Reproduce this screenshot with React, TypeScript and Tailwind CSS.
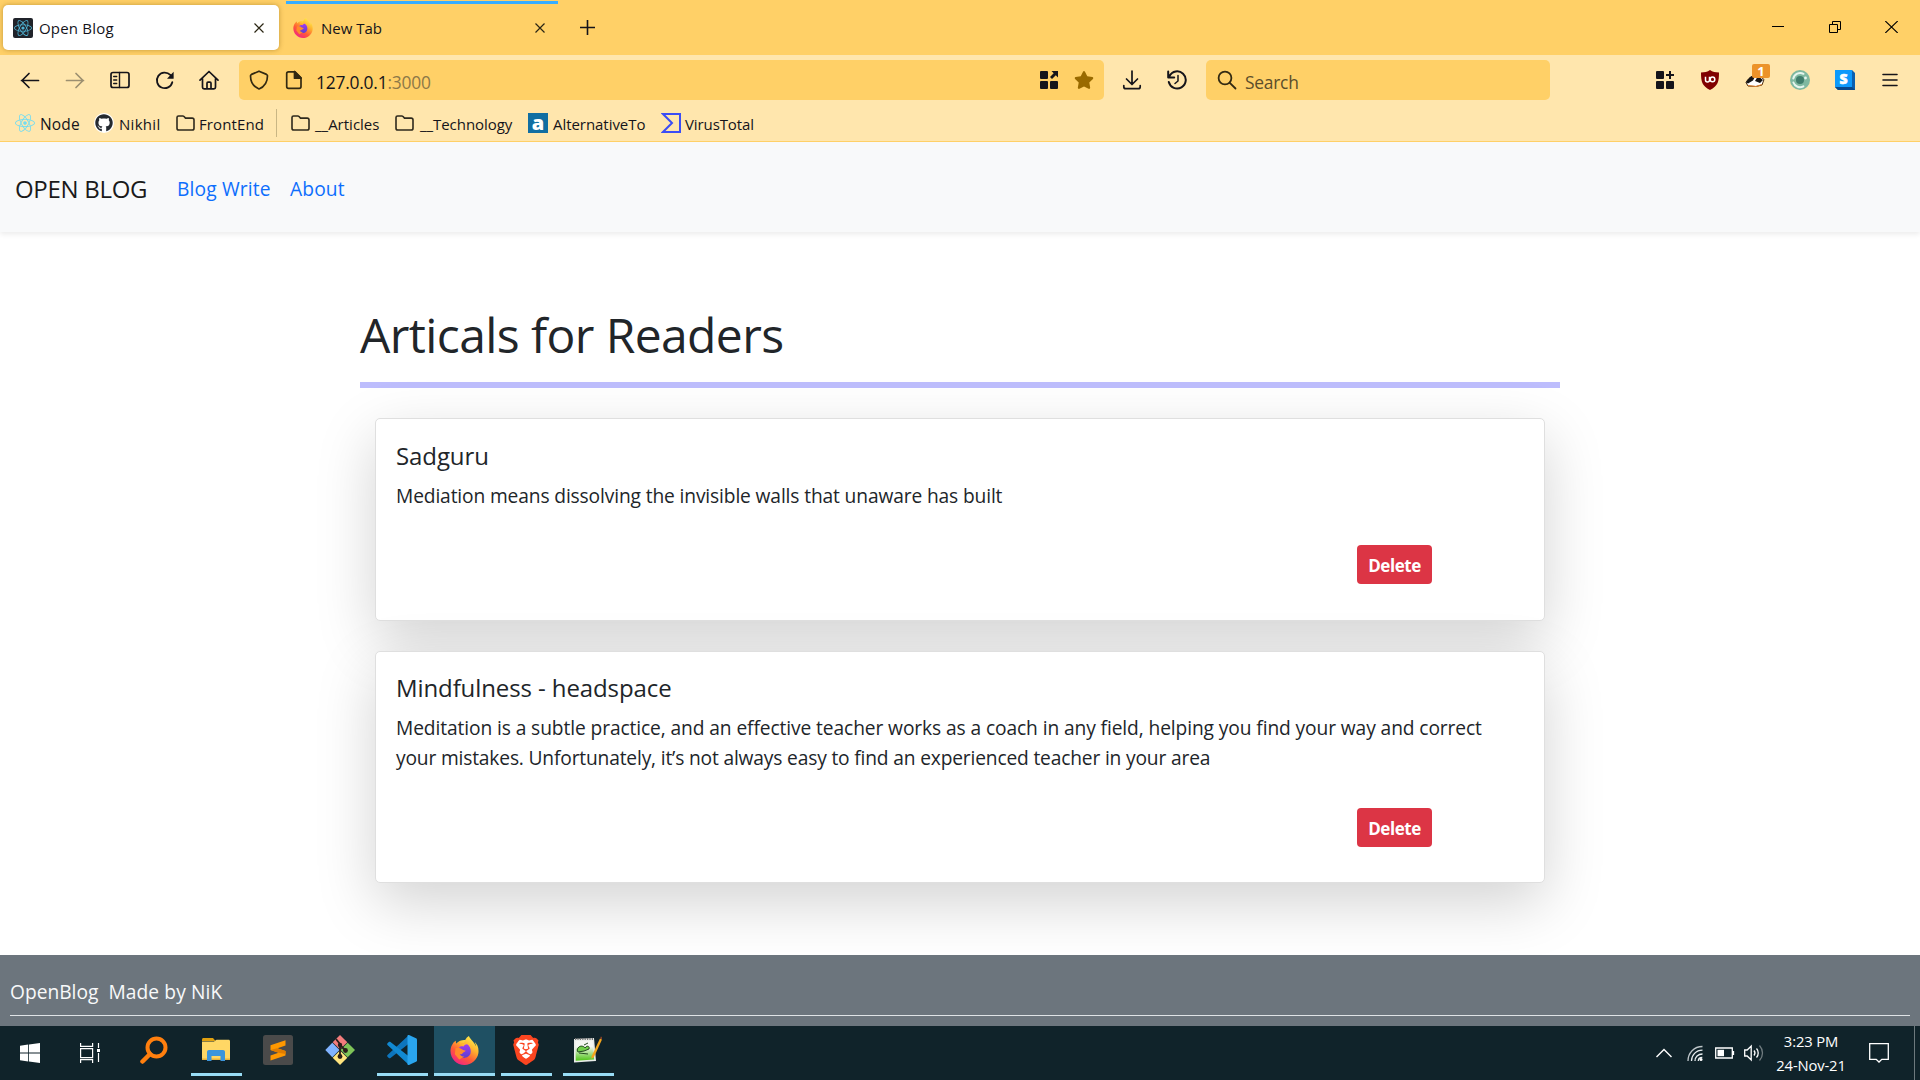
import type { ReactNode } from "react";
import { FaReact, FaGithub, FaStar } from "react-icons/fa";
import { SiBrave, SiFirefoxbrowser } from "react-icons/si";

function Firefox({ size }: { size: number }) {
  return (
    <svg width={size} height={size} viewBox="0 0 24 24" className="block shrink-0">
      <defs>
        <linearGradient id="ffBody" x1="0.85" y1="0.05" x2="0.25" y2="1">
          <stop offset="0" stopColor="#fff14d" />
          <stop offset="0.35" stopColor="#ffb02e" />
          <stop offset="0.65" stopColor="#ff5a36" />
          <stop offset="1" stopColor="#f01f8c" />
        </linearGradient>
        <linearGradient id="ffGlobe" x1="0" y1="0" x2="0" y2="1">
          <stop offset="0" stopColor="#a13cf0" />
          <stop offset="1" stopColor="#5b3fd0" />
        </linearGradient>
      </defs>
      <circle cx="12" cy="13" r="9.6" fill="url(#ffBody)" />
      <SiFirefoxbrowser size={24} fill="url(#ffBody)" color="url(#ffBody)" />
      <path d="M7.6 9.6c1-1.2 2.6-1.2 3.6-.9.7-1.3 1.8-2 3-1.9 2 1.2 3 3.400 3 5.900a5.200 5.200 0 0 1-10.400.4c.2-1.200.2-2.400.8-3.500Z" fill="url(#ffGlobe)" />
      <path d="M4.600 10.200c2.600-.6 4.500-.2 5.600 1 .8 1 2.200.5 2.800 1-.6 1.200-2 1-2.600 2-.4.8-1.400 1-2.400.8 1 1.500 2.400 2 4 1.900l-4.400 2.600L4 15Z" fill="#ff8a2b" />
    </svg>
  );
}

function TabClose({ className }: { className: string }) {
  return (
    <svg width="10" height="10" viewBox="0 0 10 10" className={className}>
      <path d="M.5.5l9 9M9.500.5l-9 9" stroke="#2b2614" strokeWidth="1.200" fill="none" />
    </svg>
  );
}

function TabStrip() {
  return (
    <div className="flex h-[55px] items-start bg-[#ffd067]">
      <div className="mt-[5px] ml-[3px] flex h-[45px] w-[276px] items-center rounded-[5px] bg-white pl-[10px] shadow-[0_0_5px_rgba(120,80,0,0.45)]">
        <span className="grid size-5 place-items-center rounded-[2px] bg-[#20232a]">
          <FaReact size={18} color="#4fb5d6" />
        </span>
        <span className="ml-[6px] text-[15px] leading-5 tracking-[0.2px] text-[#15141a]">Open Blog</span>
        <TabClose className="ml-auto mr-[15px]" />
      </div>
      <div className="mt-px ml-[7px] flex h-[49px] w-[272px] items-center border-t-[3px] border-[#37adff] pt-[1px] pl-[7px]">
        <Firefox size={20} />
        <span className="ml-2 text-[15px] leading-5 text-[#15141a]">New Tab</span>
        <TabClose className="ml-auto mr-[13px]" />
      </div>
      <svg width="15" height="15" viewBox="0 0 15 15" className="mt-5 ml-[22px]">
        <path d="M7.500 0v15M0 7.500h15" stroke="#15141a" strokeWidth="1.600" />
      </svg>
      <svg width="12" height="12" viewBox="0 0 12 12" className="mt-[21px] ml-auto">
        <path d="M0 5.500h12" stroke="#000" />
      </svg>
      <svg width="12" height="12" viewBox="0 0 12 12" className="mt-[21px] ml-[45px]">
        <path d="M.5 3.500h8v8h-8zM3.500 3.500v-3h8v8h-3" stroke="#000" fill="none" />
      </svg>
      <svg width="13" height="12" viewBox="0 0 13 12" className="mt-[21px] mr-[22px] ml-11">
        <path d="M.3 0l12.400 12M12.700 0L.3 12" stroke="#000" strokeWidth="1.100" />
      </svg>
    </div>
  );
}

function Line({ className, d, w = 20, sw = 1.7, children }: { className?: string; d?: string; w?: number; sw?: number; children?: ReactNode }) {
  return (
    <svg width={w} height="20" viewBox={`0 0 ${w} 20`} className={className} fill="none" stroke="currentColor" strokeWidth={sw} strokeLinecap="round" strokeLinejoin="round">
      {d && <path d={d} />}
      {children}
    </svg>
  );
}

function Toolbar() {
  return (
    <div className="flex h-[50px] items-center bg-[#ffe6ad] text-[#15141a]">
      <Line className="ml-5" d="M1.500 10.500h17M9 3.500l-7 7 7 7" />
      <Line className="ml-[25px] text-[#9c8f70]" d="M1.500 10.500h17M11 3.500l7 7-7 7" />
      <Line className="ml-[25px]">
        <rect x="1" y="2.500" width="18" height="15" rx="2" />
        <path d="M9.500 2.500v15M3.700 6.500h3M3.700 10h3M3.700 13.500h3" strokeWidth="1.400" />
      </Line>
      <Line className="ml-[25px]">
        <path d="M17.300 12.200a7.800 7.800 0 1 1-2-7.300l2 2" strokeWidth="1.800" />
        <path d="M18.600 1.800v7h-6.600z" fill="currentColor" stroke="none" />
      </Line>
      <Line className="ml-6">
        <path d="M1 10.200L10 1.500l9 8.700M3.500 8.500v8.700c0 1 .6 1.600 1.600 1.600h9.800c1 0 1.600-.6 1.600-1.600V8.500M8 18.500v-5.300c0-.6.4-1 1-1h2c.6 0 1 .4 1 1v5.300" />
      </Line>
      <div className="ml-5 flex h-10 w-[865px] items-center rounded-[5px] bg-[#ffd067]">
        <Line className="ml-[10px] text-[#332a12]" d="M10 1.200l7.500 3.200c.6.300 1 .7 1 1.300 0 6-3 11-8.500 13.300C4.500 16.700 1.500 11.700 1.500 5.700c0-.6.4-1 1-1.300z" />
        <Line className="ml-[15px] text-[#332a12]">
          <path d="M4.500 1.800h6.500l6 6v8.700c0 1-.8 1.800-1.800 1.800H4.500c-1 0-1.800-.8-1.800-1.800V3.600c0-1 .8-1.800 1.800-1.800z" />
          <path d="M10.500 1.500v6.700h6.500z" fill="currentColor" />
        </Line>
        <span className="ml-[12px] pt-[3px] text-[17.400px] leading-6 tracking-[-0.220px]">
          127.0.0.1<span className="text-[#8d7847]">:3000</span>
        </span>
        <svg width="18" height="18" viewBox="0 0 18 18" className="ml-auto" fill="#15141a">
          <rect width="8" height="8" rx="1" />
          <rect y="10" width="8" height="8" rx="1" />
          <rect x="10" y="10" width="8" height="8" rx="1" />
          <path d="M11.500 0H18v6.500l-2.200-2.200-3.800 3.800-2-2 3.700-3.900z" />
        </svg>
        <FaStar size={20} color="#996a00" className="mr-[10px] ml-4" />
      </div>
      <Line className="ml-[18px]" d="M10 1v13M4.500 9l5.500 5.500L15.500 9M1.800 15.500v1.200c0 1.200.8 2 2 2h12.400c1.200 0 2-.8 2-2v-1.200" />
      <Line className="ml-[25px]">
        <path d="M2.500 6a8.600 8.600 0 1 1-.7 6M1.200 1.500v6h6" strokeWidth="2" />
        <path d="M11 5.500v5.500l-3 2.500" strokeWidth="1.500" />
      </Line>
      <div className="ml-[19px] flex h-10 w-[344px] items-center rounded-[5px] bg-[#ffd067]">
        <Line className="ml-[11px] text-[#332a12]" sw={1.800}>
          <circle cx="8" cy="8" r="6.400" />
          <path d="M12.800 12.800l5.700 5.700" />
        </Line>
        <span className="ml-2 pt-[3px] text-[17.400px] leading-6 tracking-[-0.250px] text-[#5b4e2b]">Search</span>
      </div>
      <svg width="18" height="18" viewBox="0 0 18 18" className="ml-auto" fill="#15141a">
        <rect width="8" height="8" rx="1" />
        <rect y="10" width="8" height="8" rx="1" />
        <rect x="10" y="10" width="8" height="8" rx="1" />
        <path d="M13 0h2v3h3v2h-3v3h-2V5h-3V3h3z" />
      </svg>
      <svg width="18" height="20" viewBox="0 0 18 20" className="ml-[27px]">
        <path d="M9 0c2.500 1.800 5.500 2.400 9 2.500 0 9-1 13.500-9 17.500C1 16 0 11.500 0 2.500 3.500 2.400 6.500 1.800 9 0z" fill="#800000" />
        <path d="M4.500 6.700v3.200a2 2 0 0 0 4 0V6.700" stroke="#fff" strokeWidth="1.500" fill="none" />
        <circle cx="11.500" cy="9.400" r="2.300" stroke="#fff" strokeWidth="1.500" fill="none" />
      </svg>
      <div className="relative ml-[26px] h-[26px] w-[26px] self-start">
        <svg width="20" height="12" viewBox="0 0 20 12" className="mt-5">
          <path d="M1 7.500C4 2 8 0 14 .5l5 4-2 5.500-6 1.500-8-.5z" fill="#fff" stroke="#4a2c12" strokeWidth="1" />
          <path d="M1 7.500C4 2 7 0 11 0L8 5.500l-5 3zM13 1l5 4-3 3-5-2z" fill="#151515" />
          <path d="M3 10.500l8 1 6-2" stroke="#e8862c" strokeWidth="1" fill="none" />
        </svg>
        <span className="absolute top-[9px] left-[7px] grid h-[14px] w-[18px] place-items-center rounded-[2px] bg-[#ec9329] text-[13px] leading-none font-bold text-white">1</span>
      </div>
      <svg width="20" height="20" viewBox="0 0 20 20" className="ml-[19px]">
        <circle cx="10" cy="10" r="10" fill="#7fb8a0" />
        <circle cx="10" cy="10" r="4" fill="#3f7d6c" />
        <path d="M13.500 3.800A7 7 0 0 0 3.300 8.500M3.400 12.500a7 7 0 0 0 10 3.800" stroke="#e6f5ee" strokeWidth="2" fill="none" strokeLinecap="round" />
        <circle cx="15.500" cy="8" r="1.400" fill="#e6f5ee" />
      </svg>
      <svg width="20" height="20" viewBox="0 0 20 20" className="ml-[25px]">
        <path d="M17 0l3 3v17H3l-3-3z" fill="#0a5fb0" />
        <path d="M0 17h17l3 3H3z" fill="#07478a" />
        <path d="M0 0h17v17H0z" fill="#0c99fb" />
        <text x="8.500" y="13.500" textAnchor="middle" fontSize="14" fontWeight="800" fill="#fff" stroke="#fff" strokeWidth="0.600">S</text>
      </svg>
      <svg width="16" height="14" viewBox="0 0 16 14" className="mr-[22px] ml-[27px]">
        <path d="M1 1.500h14M1 7h14M1 12.500h14" stroke="#15141a" strokeWidth="1.600" strokeLinecap="round" />
      </svg>
    </div>
  );
}

function Folder({ className }: { className: string }) {
  return (
    <svg width="19" height="16" viewBox="0 0 19 16" className={className}>
      <path d="M2.600 1h4.200c.5 0 .9.200 1.200.5l1.500 1.600h6.700c1 0 1.800.8 1.800 1.800v8.300c0 1-.8 1.800-1.800 1.800H2.800C1.800 15 1 14.200 1 13.200V2.600C1 1.700 1.700 1 2.600 1z" fill="none" stroke="#2f2a1d" strokeWidth="1.600" />
    </svg>
  );
}

function Bookmarks() {
  return (
    <div className="flex h-[37px] items-center border-b border-[#ffd067] bg-[#ffe6ad] text-[15px] leading-5 text-[#15141a]">
      <FaReact size={20} color="#74dcf0" className="ml-[15px] shrink-0" />
      <span className="ml-[5px] w-[54px] pt-[2px] text-[15.500px] tracking-[0.150px]">Node</span>
      <span className="grid size-5 place-items-center rounded-full bg-white">
        <FaGithub size={18} color="#24292f" />
      </span>
      <span className="ml-[5px] w-[57px] pt-[2px] tracking-[0.3px]">Nikhil</span>
      <Folder className="" />
      <span className="ml-1 w-[77px] pt-[2px] tracking-[0.1px]">FrontEnd</span>
      <span className="h-7 w-px bg-[#c9b684]" />
      <Folder className="ml-[14px]" />
      <span className="ml-[5px] w-[80px] pt-[2px]">__Articles</span>
      <Folder className="" />
      <span className="ml-[6px] w-[108px] pt-[2px] tracking-[-0.050px]">__Technology</span>
      <span className="grid size-5 place-items-center bg-[#116ea2] pb-[3px] text-[20px] leading-none font-extrabold text-white">a</span>
      <span className="ml-[5px] w-[108px] pt-[2px] tracking-[-0.050px]">AlternativeTo</span>
      <svg width="20" height="20" viewBox="0 0 20 20">
        <path d="M2 1h17v18H2l9-9z" fill="none" stroke="#3b4df5" strokeWidth="2" />
      </svg>
      <span className="ml-1 pt-[2px] tracking-[-0.1px]">VirusTotal</span>
    </div>
  );
}

type CardProps = { title: string; lines: { text: string; tracking: string }[]; box: string; button: string };

function Card({ title, lines, box, button }: CardProps) {
  return (
    <div className={`mx-[15px] flex w-[1170px] flex-col rounded-[5px] border border-[#dfdfdf] bg-white px-5 shadow-[0_20px_60px_rgba(0,0,0,0.175)] ${box}`}>
      <h5 className="text-[24px] leading-[30px] tracking-[-0.100px]">{title}</h5>
      <p className="mt-[10px] text-[19.200px] leading-[30px] whitespace-nowrap">
        {lines.map((l) => (
          <span key={l.text} className={`block ${l.tracking}`}>{l.text}</span>
        ))}
      </p>
      <button className={`mr-[92px] h-[39px] w-[75px] self-end rounded-[4px] bg-[#dc3545] pt-[2px] text-[17px] font-bold tracking-[-0.450px] text-white ${button}`}>Delete</button>
    </div>
  );
}

function Page() {
  return (
    <div className="flex h-[884px] flex-col overflow-hidden bg-white text-[#212529]">
      <nav className="flex h-[90px] shrink-0 items-center bg-[#f8f9fa] pl-[15px] shadow-[0_2.5px_5px_rgba(0,0,0,0.075)]">
        <span className="w-[162px] pt-[3px] text-[24px] leading-[30px] tracking-[-0.3px] text-[#1a1a1a]">OPEN BLOG</span>
        <a className="w-[113px] pt-[3px] text-[19.200px] leading-[30px] tracking-[0.150px] text-[#0d6efd]">Blog Write</a>
        <a className="pt-[3px] text-[19.200px] leading-[30px] tracking-[0.150px] text-[#0d6efd]">About</a>
      </nav>
      <main className="mx-auto w-[1200px] pt-[73px]">
        <h1 className="text-[48px] leading-[60px] tracking-[-0.600px]">Articals for Readers</h1>
        <div className="mt-[17px] mb-[30px] h-[6px] bg-[#bdbdfd]" />
        <Card
          title="Sadguru"
          lines={[{ text: "Mediation means dissolving the invisible walls that unaware has built", tracking: "tracking-[-0.130px]" }]}
          box="mb-[30px] h-[203px] pt-[22px]"
          button="mt-[34px]"
        />
        <Card
          title="Mindfulness - headspace"
          lines={[
            { text: "Meditation is a subtle practice, and an effective teacher works as a coach in any field, helping you find your way and correct", tracking: "tracking-[-0.100px]" },
            { text: "your mistakes. Unfortunately, it’s not always easy to find an experienced teacher in your area", tracking: "tracking-[-0.165px]" },
          ]}
          box="h-[232px] pt-[21px]"
          button="mt-[35px]"
        />
      </main>
      <footer className="relative mt-auto h-[71px] shrink-0 bg-[#6c757d] px-[10px] pt-[22px] text-[19.200px] leading-[30px] text-[#f8f9fa]">
        <p className="flex gap-[10px] border-b border-[#dfe3e6] pb-2">
          <span>OpenBlog</span>
          <span className="tracking-[0.1px]">Made by NiK</span>
        </p>
      </footer>
    </div>
  );
}

function TaskItem({ children, open, active }: { children: ReactNode; open?: boolean; active?: boolean }) {
  return (
    <div className="flex h-[54px] w-[62px] flex-col items-center">
      <div className={`grid h-[47px] w-[61px] shrink-0 place-items-center pt-px ${active ? "bg-[#1f5063]" : ""}`}>{children}</div>
      {open && <span className={`h-[3px] bg-[#98dcf5] ${active ? "w-[61px]" : "w-[51px]"}`} />}
    </div>
  );
}

function Taskbar() {
  return (
    <div className="flex h-[54px] items-center bg-[#10232a] text-white">
      <svg width="20" height="20" viewBox="0 0 20 20" className="ml-5" fill="#fff">
        <path d="M0 2.800l8.200-1.200v8H0zM9 1.500L20 0v9.600H9zM0 10.500h8.200v8L0 17.300zM9 10.500h11V20L9 18.600z" />
      </svg>
      <svg width="20" height="20" viewBox="0 0 20 20" className="ml-10" fill="none" stroke="#fff" strokeWidth="1.200">
        <path d="M.6 0v3.400h12V0M.6 5.600h12v9H.6zM.6 20v-3.400h12V20M18.500 0v5M18.500 10v9" />
        <path d="M17 6h3v3h-3z" fill="#fff" stroke="none" />
      </svg>
      <svg width="28" height="28" viewBox="0 0 28 28" className="mb-[6px] ml-10" fill="none" stroke="#ff7f0e" strokeLinecap="round">
        <circle cx="16.500" cy="11.500" r="9" strokeWidth="4" />
        <path d="M10 18l-7.500 7.500" strokeWidth="4.500" />
      </svg>
      <div className="ml-[17px] flex">
        <TaskItem open>
          <svg width="28" height="24" viewBox="0 0 28 24">
            <path d="M0 1.500C0 .6.600 0 1.500 0h9.500l2.500 3H0z" fill="#e0a010" />
            <path d="M0 3.500h12L14.500 1.700H26.500c1 0 1.500.6 1.500 1.500V22H0z" fill="#ffd765" />
            <path d="M0 20.500h28V22H0z" fill="#e8b23a" />
            <path d="M5 23v-9c0-1.200.8-2 2-2h14c1.200 0 2 .8 2 2v9h-4.500v-5h-9v5z" fill="#3c95dc" />
          </svg>
        </TaskItem>
        <TaskItem>
          <svg width="30" height="30" viewBox="0 0 30 30">
            <rect width="30" height="30" rx="2.500" fill="#4a4a4a" />
            <path d="M7.500 10.200l15-5v5.300l-8 2.700 8 2.700v4.700l-15 5v-5.200l8-2.700-8-2.600z" fill="#ff9800" />
            <path d="M7.500 15.100l6.500-1.900 8.500 2.700v3l-7-1.200z" fill="#e07c00" />
          </svg>
        </TaskItem>
        <TaskItem>
          <svg width="30" height="30" viewBox="0 0 30 30">
            <path d="M15 0l7.300 7.300-7.300 7.300-7.300-7.300z" fill="#f27c7c" />
            <path d="M7.300 7.800l7.200 7.200-7.200 7.300L.3 15z" fill="#80b3ff" />
            <path d="M22.700 7.800L30 15l-7.300 7.300-7.200-7.300z" fill="#7ec458" />
            <path d="M15 15.500l7.300 7.200L15 30l-7.300-7.300z" fill="#ffe57e" />
            <path d="M11 4l4 5v12M15 10l6 6" stroke="#2a1d1a" strokeWidth="1.800" fill="none" />
            <circle cx="15" cy="10" r="2.200" fill="#2a1d1a" />
            <circle cx="15" cy="21.500" r="2.400" fill="#2a1d1a" />
            <circle cx="20.500" cy="15.500" r="2.400" fill="#2a1d1a" />
          </svg>
        </TaskItem>
        <TaskItem open>
          <svg width="30" height="30" viewBox="0 0 30 30">
            <path d="M22 0v8.500L3.500 23c-.6.500-1.200.4-1.700 0L.5 21.700c-.5-.5-.5-1.200 0-1.700z" fill="#0d75bd" />
            <path d="M22 30v-8.500L3.500 7c-.6-.5-1.200-.4-1.700 0L.5 8.300c-.5.500-.5 1.200 0 1.700z" fill="#1189d2" />
            <path d="M22 0l7 3.200c.6.300 1 .8 1 1.500v20.600c0 .7-.4 1.200-1 1.500L22 30c-.8.200-1.500-.4-1.500-.8V.8c0-.4.7-1 1.500-.8z" fill="#2aa5ee" />
          </svg>
        </TaskItem>
        <TaskItem open active>
          <Firefox size={29} />
        </TaskItem>
        <TaskItem open>
          <svg width="30" height="30" viewBox="0 0 24 24">
            <path d="M12 1l7 2 2 4-2 11-7 5-7-5L3 7l2-4z" fill="#fff" />
            <SiBrave size={24} color="#fb4520" />
          </svg>
        </TaskItem>
        <TaskItem open>
          <svg width="30" height="28" viewBox="0 0 30 28" className="-translate-x-px">
            <defs>
              <linearGradient id="npPaper" x1="0" y1="0" x2="0" y2="1">
                <stop offset="0.300" stopColor="#f4f6f2" />
                <stop offset="1" stopColor="#4fc516" />
              </linearGradient>
            </defs>
            <path d="M2 3l20-1 2 23-22 1.500z" fill="#e9ece9" />
            <path d="M3.500 5l17-.6 1.700 19-18.500 1.300z" fill="url(#npPaper)" />
            <path d="M3 3h19" stroke="#777" strokeWidth="2" strokeDasharray="1.200 1.200" />
            <path d="M6 12c2-3 6-2 7 0 2-3 5-2 4 1l-5 2-6 1c-1-1-1-3 0-4zM7 17l9 1M12 9l4-2" fill="#6fce4a" stroke="#234a1e" strokeWidth="1" />
            <path d="M19.500 20.500L28 2.500l2 1-8 17.500-2.500 1.800z" fill="#f3a51c" />
            <path d="M28 2.500l.8-2 1.200.6v2.400z" fill="#7b3f2a" />
          </svg>
        </TaskItem>
      </div>
      <svg width="16" height="10" viewBox="0 0 16 10" className="ml-auto" fill="none" stroke="#fff" strokeWidth="1.400">
        <path d="M.5 9L8 1.500 15.500 9" />
      </svg>
      <svg width="16" height="16" viewBox="0 0 16 16" className="ml-[15px]" fill="none" stroke="#e8eef0" strokeWidth="1.300">
        <path d="M1 16C1 8 7 1.500 15.500 1.500" opacity=".8" />
        <path d="M4.500 16C4.500 10 9 5.200 15.500 5.200M8 16c0-4 3-7 7.500-7M11.300 16c0-2 1.500-3.500 4-3.500" />
        <circle cx="14" cy="14.500" r="1.500" fill="#fff" stroke="none" />
      </svg>
      <svg width="20" height="12" viewBox="0 0 20 12" className="ml-3">
        <path d="M.7 1h16.600v10H.7zM18.500 4v4" fill="none" stroke="#fff" strokeWidth="1.300" />
        <path d="M2.500 2.800h6.500v6.400H2.500z" fill="#fff" />
      </svg>
      <svg width="20" height="18" viewBox="0 0 20 18" className="ml-[9px]" fill="none" stroke="#fff" strokeWidth="1.300">
        <path d="M.7 6v6h2.500l4 4V2l-4 4zM10 6.500c1.200 1.500 1.200 3.500 0 5M12.500 4.500c2.300 2.500 2.300 6.500 0 9" />
        <path d="M15.500 1.500c4 4.500 4 10.500 0 15" opacity=".4" />
      </svg>
      <div className="ml-[8px] flex w-[78px] flex-col items-center pb-px text-[14.800px] leading-6 tracking-[-0.150px]">
        <span className="whitespace-nowrap">3:23 PM</span>
        <span className="whitespace-nowrap">24-Nov-21</span>
      </div>
      <svg width="20" height="20" viewBox="0 0 20 20" className="ml-[19px]">
        <path d="M.7.7h18.600v15.600h-6.500L10 19l-2.800-2.700H.7z" fill="none" stroke="#fff" strokeWidth="1.300" />
      </svg>
      <span className="mr-[5px] ml-[25px] h-full w-px bg-[#6d797d]" />
    </div>
  );
}

export default function App() {
  return (
    <div className="flex h-[1080px] w-[1920px] flex-col overflow-hidden font-['Open_Sans','Noto_Sans',sans-serif]">
      <TabStrip />
      <Toolbar />
      <Bookmarks />
      <Page />
      <Taskbar />
    </div>
  );
}
